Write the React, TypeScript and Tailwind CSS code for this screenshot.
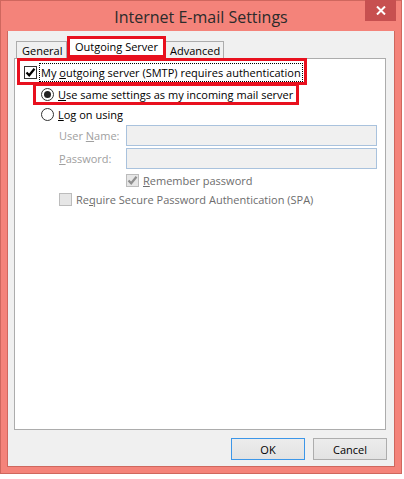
import React from "react";

const font = { fontFamily: '"Open Sans", "Noto Sans", sans-serif' };

function Check({ color = "#000" }: { color?: string }) {
  return (
    <svg width="11" height="11" viewBox="0 0 11 11" className="block">
      <path d="M1.5 5.5 L4.2 8.3 L9.5 1.8" fill="none" stroke={color} strokeWidth="2.2" />
    </svg>
  );
}

function Radio({ on }: { on?: boolean }) {
  return (
    <div className="w-[13px] h-[13px] rounded-full border border-[#333] bg-white flex items-center justify-center shrink-0">
      {on && <div className="w-[7px] h-[7px] rounded-full bg-[#222]" />}
    </div>
  );
}

export default function App() {
  return (
    <div className="w-[404px] h-[479px] bg-white text-[11px] leading-none whitespace-nowrap" style={font}>
      <div className="w-[402px] h-[474px] bg-[#f4837a] border border-[#cf675e] flex flex-col px-[6px]">
        {/* title bar */}
        <div className="relative h-[30px] flex items-center justify-center shrink-0">
          <span className="text-[16px] text-[#2b2b2b] pt-[1px]">Internet E-mail Settings</span>
          <div className="absolute top-[-1px] right-[-1px] w-[31px] h-[21px] bg-[#c75050] flex items-center justify-center">
            <svg width="10" height="9" viewBox="0 0 10 9">
              <path d="M1 0.5 L9 8.5 M9 0.5 L1 8.5" stroke="#fff" strokeWidth="2" />
            </svg>
          </div>
        </div>

        {/* client area */}
        <div className="h-[436px] bg-[#f0f0f0] border-x border-b border-[#cf675e] flex flex-col pl-[6px] pr-[7px]">
          {/* tabs */}
          <div className="flex items-end mt-[5px] pl-[2px] h-[22px] relative z-10">
            <div className="h-[17px] w-[51px] border border-b-0 border-[#acacac] bg-[#f0f0f0] flex items-center pl-[5px] text-black">
              General
            </div>
            <div className="h-[22px] w-[99px] border-[3px] border-[#e8101e] bg-white flex items-center pl-[5px] pb-[2px] text-black">
              Outgoing Server
            </div>
            <div className="h-[17px] w-[58px] border border-b-0 border-l-0 border-[#acacac] bg-[#f0f0f0] flex items-center pl-[4px] text-black">
              Advanced
            </div>
          </div>

          {/* panel */}
          <div className="h-[372px] w-[372px] bg-white border border-[#acacac] flex flex-col">
            <div className="ml-[2px] -mt-[1px] w-[290px] h-[27px] border-[3px] border-[#e8101e] flex items-center pl-[4px] relative z-20">
              <div className="w-[13px] h-[13px] border border-[#333] bg-white flex items-center justify-center mt-[2px]">
                <Check />
              </div>
              <div className="ml-[2px] h-[19px] border border-dotted border-black flex items-center px-[1px] mt-[1px]">
                <span>
                  My <u>o</u>utgoing server (SMTP) requires authentication
                </span>
              </div>
            </div>

            <div className="ml-[18px] -mt-[2px] w-[266px] h-[22px] border-[3px] border-[#e8101e] flex items-center pl-[5px] gap-[4px] relative z-20">
              <Radio on />
              <span>
                <u>U</u>se same settings as my incoming mail server
              </span>
            </div>

            <div className="ml-[26px] h-[18px] flex items-center gap-[4px]">
              <Radio />
              <span>
                <u>L</u>og on using
              </span>
            </div>

            <div className="flex items-center mt-[2px] ml-[44px]">
              <span className="w-[67px] text-[#a0a0a0]">
                User <u>N</u>ame:
              </span>
              <div className="w-[251px] h-[21px] bg-[#f0f0f0] border border-[#a9c2dd]" />
            </div>
            <div className="flex items-center mt-[2px] ml-[44px]">
              <span className="w-[67px] text-[#a0a0a0]">
                <u>P</u>assword:
              </span>
              <div className="w-[251px] h-[21px] bg-[#f0f0f0] border border-[#a9c2dd]" />
            </div>

            <div className="flex items-center mt-[5px] ml-[111px] gap-[4px]">
              <div className="w-[13px] h-[13px] border border-[#bcbcbc] bg-[#e6e6e6] flex items-center justify-center">
                <Check color="#8f8f8f" />
              </div>
              <span className="text-[#6d6d6d]">
                <u>R</u>emember password
              </span>
            </div>

            <div className="flex items-center mt-[6px] ml-[44px] gap-[4px]">
              <div className="w-[13px] h-[13px] border border-[#bcbcbc] bg-[#e6e6e6]" />
              <span className="text-[#6d6d6d]">
                Re<u>q</u>uire Secure Password Authentication (SPA)
              </span>
            </div>
          </div>

          {/* buttons */}
          <div className="flex justify-end gap-[8px] mt-[8px]">
            <button className="w-[74px] h-[22px] border border-[#3c96e8] bg-[linear-gradient(#ececec,#e2e2e2)] text-black">
              OK
            </button>
            <button className="w-[74px] h-[22px] border border-[#adadad] bg-[linear-gradient(#ececec,#e2e2e2)] text-black">
              Cancel
            </button>
          </div>
        </div>
      </div>
    </div>
  );
}
